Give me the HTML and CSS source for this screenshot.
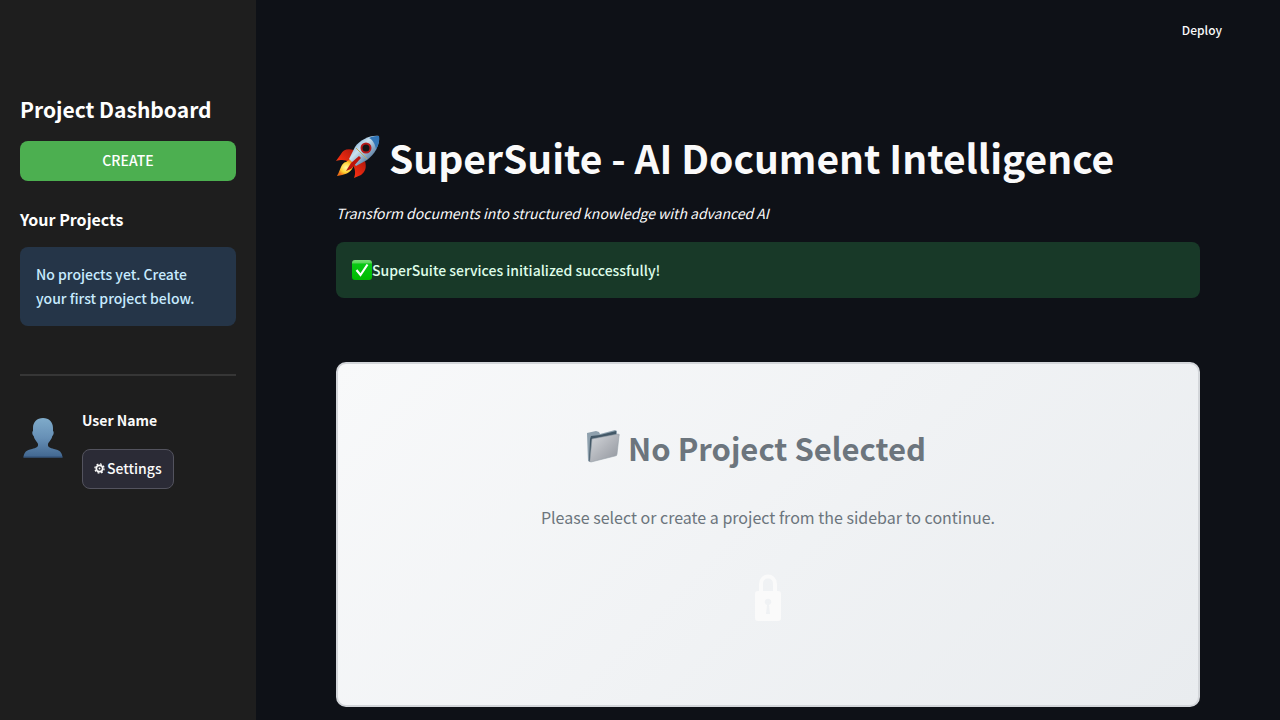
FILE: index.html
```html
<!DOCTYPE html>
<html lang="en">
<head>
<meta charset="utf-8">
<meta name="viewport" content="width=device-width, initial-scale=1">
<title>SuperSuite</title>
<link rel="stylesheet" href="styles.css">
</head>
<body>
<div class="app">
  <aside class="sidebar">
    <h2 class="sidebar-title">Project Dashboard</h2>
    <button class="create" type="button">CREATE</button>
    <h3 class="sidebar-subtitle">Your Projects</h3>
    <p class="info">No projects yet. Create your first project below.</p>
    <hr class="divider">
    <div class="user">
      <svg class="avatar" viewBox="0 0 40 40" aria-hidden="true">
        <defs><linearGradient id="person" x1="0" y1="0" x2="0" y2="1"><stop offset="0" stop-color="#7fabca"/><stop offset="0.5" stop-color="#6790b6"/><stop offset="1" stop-color="#41668f"/></linearGradient></defs>
        <path fill="url(#person)" d="M20 0C26 0 30 4 30 10V13C31 13 31 17 29.300 18C28.500 22 25.500 24 25 26C24.500 29 27 30 31 31C36.500 32 39 34 39.500 39.500H.5C1 34 3.500 32 9 31C13 30 15.500 29 15 26C14.500 24 11.500 22 10.700 18C9 17 9 13 10 13V10C10 4 14 0 20 0Z"/>
        <path d="M.5 39H39.500" stroke="#304f74"/>
      </svg>
      <div class="user-details">
        <strong class="user-name">User Name</strong>
        <button class="settings" type="button">
          <svg class="gear" viewBox="0 0 12 12" aria-hidden="true"><g fill="none" stroke="#fafafa"><circle cx="6" cy="6" r="3.500" stroke-width="1.900"/><circle cx="6" cy="6" r="5" stroke-width="1.400" stroke-dasharray="1.960"/></g><circle cx="6" cy="6" r="1" fill="#fafafa"/></svg>
          Settings
        </button>
      </div>
    </div>
  </aside>
  <div class="content">
    <header class="toolbar"><button class="deploy" type="button">Deploy</button></header>
    <main class="main">
      <h1 class="title">
        <svg class="rocket" viewBox="0 0 44 44" aria-hidden="true">
          <defs>
            <linearGradient id="hull" x1="0" y1="0" x2="1" y2="1"><stop offset="0" stop-color="#4d8ac4"/><stop offset=".4" stop-color="#c9e1ef"/><stop offset=".65" stop-color="#7899b8"/><stop offset="1" stop-color="#254368"/></linearGradient>
            <linearGradient id="fin" x1="1" y1="0" x2="0" y2="1"><stop offset="0" stop-color="#8e1009"/><stop offset=".6" stop-color="#f02b11"/><stop offset="1" stop-color="#ff8a18"/></linearGradient>
            <radialGradient id="flame"><stop offset="0" stop-color="#fff9a5"/><stop offset=".6" stop-color="#ffd231"/><stop offset="1" stop-color="#ee6f16"/></radialGradient>
          </defs>
          <path fill="url(#fin)" d="M18 15C11 13 7 15 5 19L0 26C6 24 10 25 13 27ZM29 26C31 33 29 37 25 40L18 43C20 38 19 34 17 30Z"/>
          <path fill="url(#flame)" d="M10 27C5 28 5 34 1 41C8 40 15 38 17 32L19 27L14 24Z"/>
          <path fill="url(#hull)" d="M43 1C34 0 24 5 19 12L13 24L20 31L31 25C39 19 44 10 43 1Z"/>
          <path fill="#3276b7" d="M33 3C37 1 40 1 43 1C44 6 42 11 40 14C39 9 37 5 33 3Z"/>
          <path fill="#bc140d" d="M23 21L25 23L15 34L10 36L15 28Z"/>
          <circle cx="30" cy="13" r="4.500" fill="#151719" stroke="#b61a1b" stroke-width="2"/>
          <path d="M20 13L31 24" stroke="#c2a85a" fill="none"/>
        </svg>
        <span>SuperSuite - AI Document Intelligence</span>
      </h1>
      <p class="tagline">Transform documents into structured knowledge with advanced AI</p>
      <div class="success" role="status">
        <svg class="check" viewBox="0 0 20 20" aria-hidden="true">
          <defs><linearGradient id="tick" x1="0" y1="0" x2="0" y2="1"><stop stop-color="#79df76"/><stop offset=".14" stop-color="#5bd65b"/><stop offset=".2" stop-color="#08c914"/><stop offset="1" stop-color="#00b900"/></linearGradient></defs>
          <rect width="20" height="20" rx="3" fill="url(#tick)"/><path d="M4.500 10L8.500 15L15.500 4.500" fill="none" stroke="#fff" stroke-width="2.200"/>
        </svg>
        <span>SuperSuite services initialized successfully!</span>
      </div>
      <section class="empty">
        <h2 class="empty-title">
          <svg class="folder" viewBox="0 0 34 34" aria-hidden="true">
            <defs><linearGradient id="cover" x1="0" y1="0" x2="1" y2="1"><stop stop-color="#d6d9dd"/><stop offset=".5" stop-color="#b2b5bb"/><stop offset="1" stop-color="#90959d"/></linearGradient></defs>
            <path fill="#8fa1ae" d="M1 4L10 2L13 3L14 5L29 1L31 2V7L4 33L2 32Z"/>
            <path fill="#435867" d="M5 7L14 6L30 2V6L7 10L5 33L3 32L4 10Z"/>
            <path fill="url(#cover)" stroke="#969fa7" stroke-width=".6" d="M6 10L32 5Q34 5 33 7L31 25Q31 27 29 27L5 33Q3 33 4 31Z"/>
          </svg>
          <span>No Project Selected</span>
        </h2>
        <p class="empty-text">Please select or create a project from the sidebar to continue.</p>
        <svg class="lock" viewBox="0 0 28 48" aria-hidden="true"><path d="M7 19V10C7 0 21 0 21 10V19" fill="none" stroke="#fafafa" stroke-width="4"/><path fill="#fafafa" fill-rule="evenodd" d="M4 17H24Q27 17 27 20V44Q27 47 24 47H4Q1 47 1 44V20Q1 17 4 17ZM13 31L12 40H16L15 31A3.200 3.200 0 1 0 13 31Z"/></svg>
      </section>
    </main>
  </div>
</div>
</body>
</html>
```
FILE: styles.css
```css
* { box-sizing: border-box; }
body, h1, h2, h3, p { margin: 0; }
body {
  background: #0e1117;
  color: #fafafa;
  font-family: "Noto Sans CJK SC", "Noto Sans", sans-serif;
  font-size: 14px;
  font-weight: 500;
  line-height: 24px;
}
button { font: inherit; color: inherit; cursor: pointer; }
svg { display: block; flex: none; }
.app { display: flex; min-height: 100vh; }
.sidebar { width: 256px; flex: none; padding: 94px 20px 24px; background: #1e1e1e; }
.sidebar-title { font-size: 21px; font-weight: 700; line-height: 30px; color: #fff; }
.create { display: block; width: 100%; height: 40px; margin: 17px 0 27px; padding: 0 0 2px; border: 0; border-radius: 8px; background: #4caf50; color: #fff; }
.sidebar-subtitle { font-size: 16px; line-height: 22px; font-weight: 700; color: #fff; }
.info { margin-top: 17px; padding: 15px 32px 16px 16px; border-radius: 8px; background: #253548; color: #c7ebff; }
.divider { height: 2px; margin: 48px 0 32px; border: 0; background: #363636; }
.user { display: flex; gap: 19px; align-items: center; padding-left: 3px; }
.avatar { width: 40px; height: 40px; margin-top: -22px; }
.user-details { display: flex; flex-direction: column; align-items: flex-start; gap: 17px; }
.user-name { font-weight: 700; }
.settings { display: flex; align-items: center; gap: 2px; height: 40px; padding: 0 11px 2px; border: 1px solid #53535e; border-radius: 8px; background: #2b2b36; }
.gear { width: 11px; height: 11px; }
.content { flex: 1; min-width: 0; }
.toolbar { display: flex; justify-content: flex-end; height: 60px; padding: 0 50px; align-items: center; }
.deploy { padding: 0 8px; border: 0; background: none; font-size: 12px; }
.main { padding: 71px 80px 13px; }
.title { display: flex; align-items: center; gap: 9px; font-size: 39px; line-height: 52px; font-weight: 700; }
.rocket { width: 44px; height: 44px; }
.tagline { margin: 18px 0 17px; font-style: italic; font-weight: 400; }
.success { display: flex; align-items: center; padding: 16px; border-radius: 8px; background: #183928; color: #dffde9; }
.check { width: 20px; height: 20px; }
.empty { display: flex; flex-direction: column; align-items: center; margin-top: 64px; padding: 60px 30px 83px; border: 2px solid #d3d6da; border-radius: 10px; background: linear-gradient(135deg, #f8f9fa, #e9ecef); color: #6c757d; text-align: center; }
.empty-title { display: flex; align-items: center; gap: 8px; padding-right: 24px; font-size: 31px; line-height: 48px; font-weight: 700; }
.folder { width: 34px; height: 34px; margin-bottom: 4px; }
.empty-text { margin: 32px 0 44px; font-size: 16px; line-height: 26px; font-weight: 400; }
.lock { width: 28px; height: 48px; }
```
